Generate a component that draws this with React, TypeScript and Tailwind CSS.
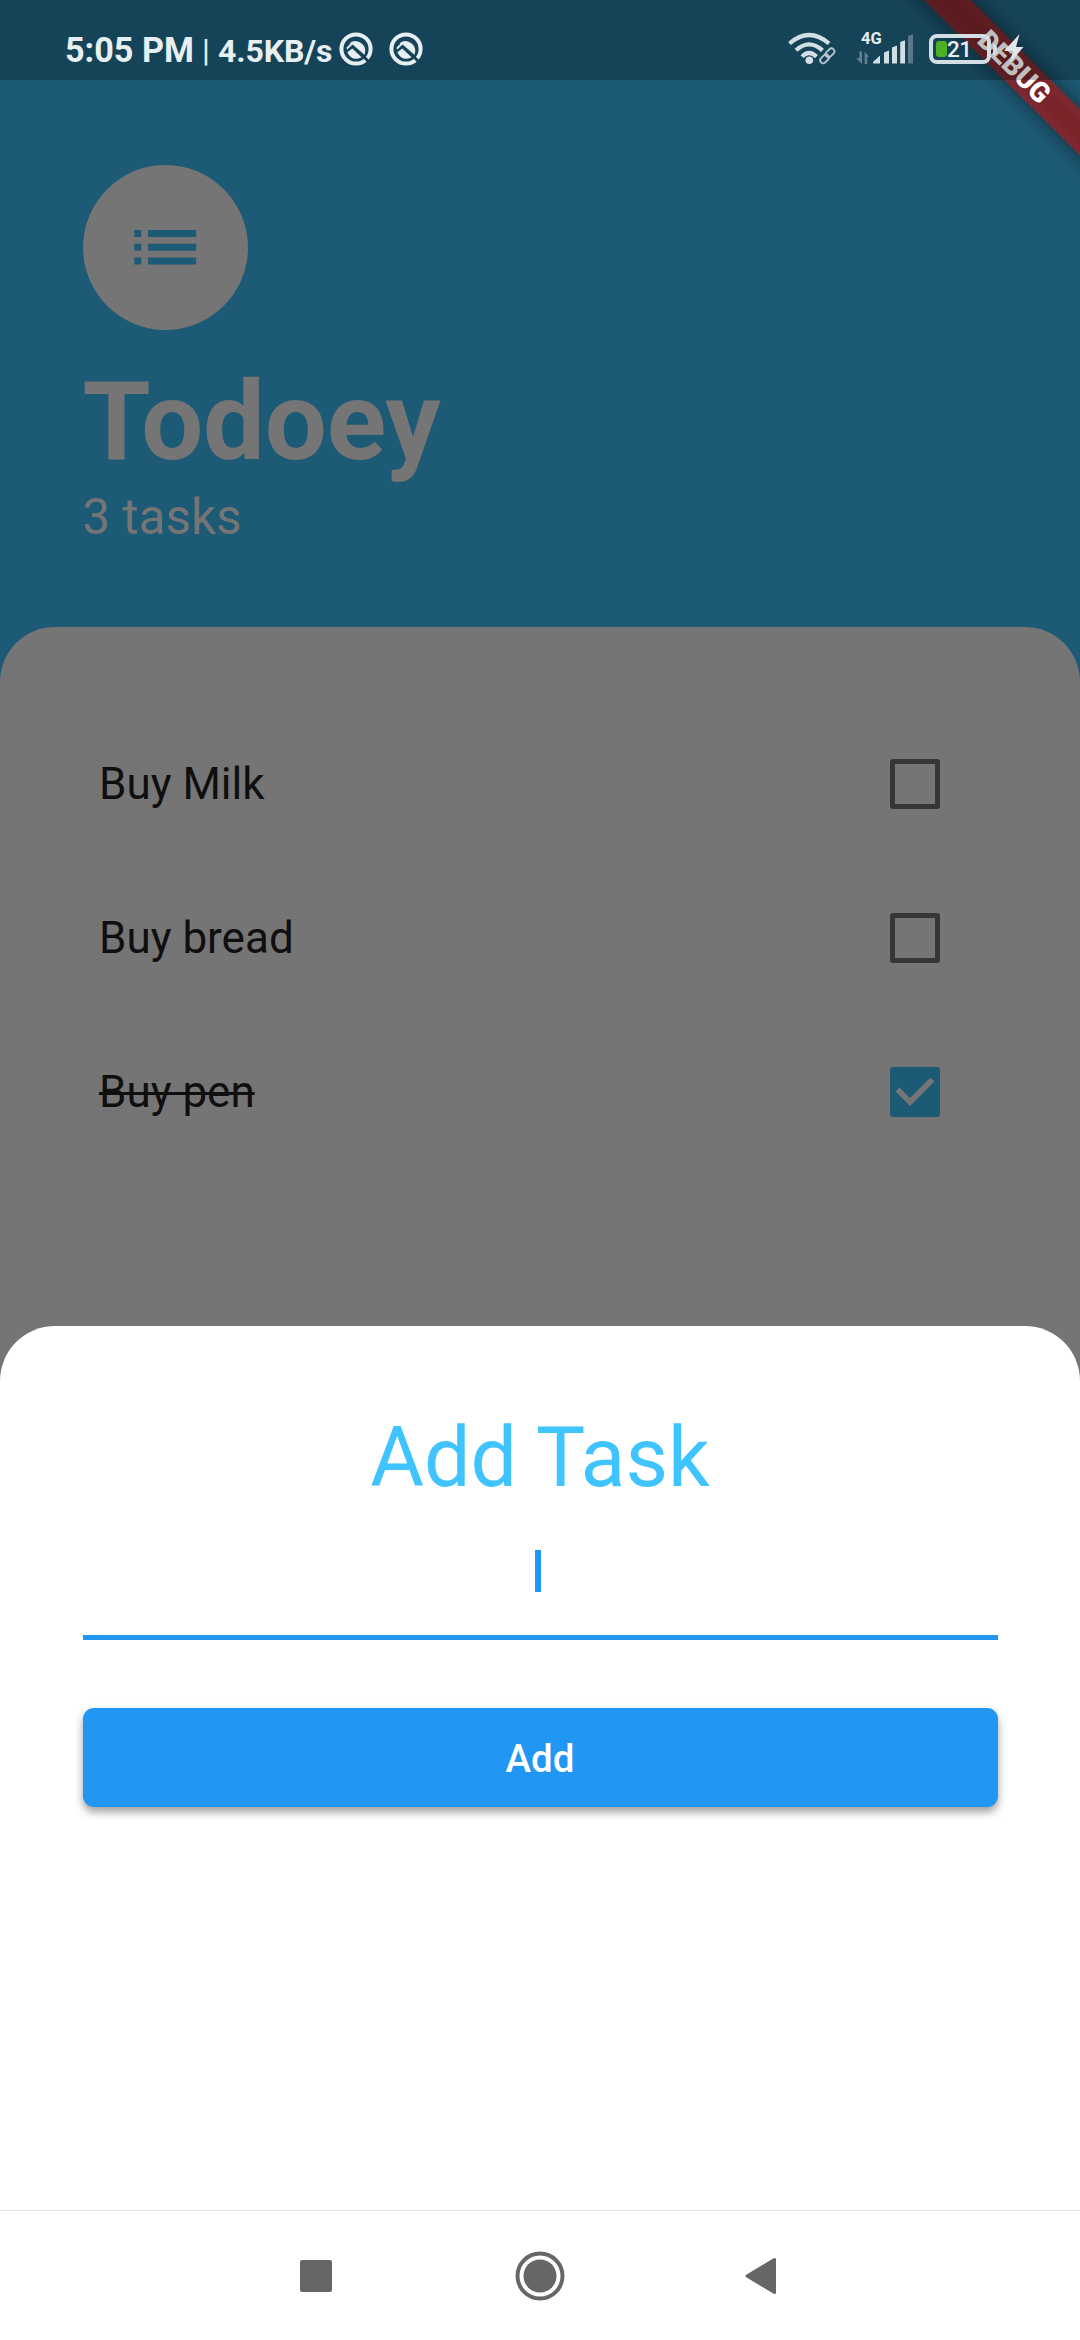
import React from "react";

const tasks = [
  { name: "Buy Milk", done: false },
  { name: "Buy bread", done: false },
  { name: "Buy pen", done: true },
];

function AppBadge() {
  return (
    <svg className="h-[34px] w-[34px] shrink-0" viewBox="0 0 34 34" fill="none">
      <circle cx="17" cy="17" r="14.6" stroke="#e8eff2" strokeWidth="4" />
      <path d="M10.500 11.200A9.800 9.800 0 0 1 26 21L25.400 22.800 13.600 12.600 8 17.800 7.600 15.600 11.500 11.800Z" fill="#e8eff2" />
      <path d="M8.300 20.200 13.300 16.400 22.600 25.200Q13 30 8.300 20.200Z" fill="#e8eff2" />
      <path d="M23.500 23.500 32 32" stroke="#184357" strokeWidth="3" />
    </svg>
  );
}

function WifiIcon() {
  return (
    <svg className="h-[34px] w-[48px]" viewBox="0 0 48 34" fill="none" stroke="#d3dfe5" strokeWidth="4.2">
      <path d="M1.5 11.5Q21 -5.5 41 11.5" />
      <path d="M8 18.3Q21 6.5 34.5 18.3" />
      <path d="M14 24.6Q21 17.5 28.5 24.6" />
      <circle cx="21.3" cy="28.3" r="3.8" fill="#d3dfe5" stroke="none" />
      <g strokeWidth="1.8" stroke="#b9c8d0">
        <rect x="-5" y="-3" width="10" height="6" rx="3" transform="translate(42 20.8) rotate(-45)" />
        <rect x="-5" y="-3" width="10" height="6" rx="3" transform="translate(36.6 26.8) rotate(-45)" />
      </g>
    </svg>
  );
}

function SignalIcon() {
  return (
    <svg className="h-[32px] w-[60px]" viewBox="0 0 60 32" fill="#d3dfe5">
      <g fill="#647f8d">
        <path d="M3.4 17.5h2.6V30L0 24.2h3.4Z" />
        <path d="M8.6 30V17.5l4.4 5.4h-1.8V30Z" />
      </g>
      <path d="M17 29.5V28l7-6.5v8Z" />
      <path d="M28 29.5V18.5l5-2v13Z" />
      <path d="M36 29.5v-16l5-2v18Z" />
      <path d="M44.2 29.5V8l4.8-1.8v23.3Z" />
      <path d="M52 29.5V2l5-1.8v29.3Z" fill="#5d7988" />
    </svg>
  );
}

function StatusBar() {
  return (
    <div className="relative z-20 flex h-[80px] items-start bg-black/25 text-[#e8eff2]">
      <div className="ml-[65px] mt-[30px] w-[137px] whitespace-nowrap text-[34.200px] font-bold leading-[40px]">5:05 PM</div>
      <div className="mt-[30px] w-[16px] text-[32px] leading-[40px]">|</div>
      <div className="mt-[31px] w-[121px] whitespace-nowrap text-[32px] font-bold leading-[40px] tracking-[-0.1px]">4.5KB/s</div>
      <div className="mt-[32px] flex gap-[16px]">
        <AppBadge />
        <AppBadge />
      </div>
      <div className="ml-[365px] mt-[32px] flex">
        <WifiIcon />
      </div>
      <div className="relative ml-[20px] mt-[34px] flex">
        <SignalIcon />
        <span className="absolute left-[5px] top-[-5px] text-[16.500px] font-bold leading-[20px]">4G</span>
      </div>
      <div className="ml-[13px] mt-[34px] flex items-center">
        <div className="flex h-[30px] w-[62px] items-center rounded-[8px] border-[4px] border-[#d3dfe5] pl-[3px]">
          <div className="h-[16px] w-[11px] shrink-0 rounded-[3px] bg-[#4caf24]" />
          <div className="text-[22.500px] font-medium leading-[24px] tracking-[-0.5px]">21</div>
        </div>
        <div className="ml-[2px] h-[11px] w-[4px] rounded-r-[4px] bg-[#d3dfe5]" />
        <svg className="ml-[7px] h-[30px] w-[20px]" viewBox="0 0 20 30" fill="#dfe7eb">
          <path d="M15.500 0 0 17h9L5.500 29.500 19.500 13H12Z" />
        </svg>
      </div>
    </div>
  );
}

function DebugBanner() {
  return (
    <div className="absolute right-0 top-0 z-10 h-[220px] w-[220px] overflow-hidden">
      <div className="absolute left-[-12px] top-[48.500px] h-[33px] w-[330px] rotate-45 bg-black/50 blur-[10px]" />
      <div className="absolute left-[-12px] top-[48.500px] flex h-[33px] w-[330px] rotate-45 items-center justify-center bg-[#b71c1c]/63 pl-[4px] text-[28px] font-black leading-[33px] text-white">
        DEBUG
      </div>
    </div>
  );
}

function Checkbox({ done }: { done: boolean }) {
  if (!done) {
    return <div className="h-[50px] w-[50px] rounded-[3px] border-[5.500px] border-[#363636]" />;
  }
  return (
    <div className="h-[50px] w-[50px] rounded-[3px] bg-[#1d5a75]">
      <svg viewBox="0 0 50 50" fill="none" stroke="#757575" strokeWidth="5.5">
        <path d="M7.500 22.500 20 35 42.500 12.500" />
      </svg>
    </div>
  );
}

export default function App() {
  return (
    <div className="relative flex h-[2340px] w-[1080px] flex-col overflow-hidden bg-[#1d5a75] font-[Roboto,sans-serif]">
      <StatusBar />
      <DebugBanner />

      <header className="h-[547px] pl-[82.500px] pt-[85px] text-[#757575]">
        <div className="flex h-[165px] w-[165px] items-center justify-center rounded-full bg-[#757575]">
          <svg className="h-[82.500px] w-[82.500px]" viewBox="0 0 24 24" fill="#1d5a75">
            <path d="M3 13h2v-2H3v2zm0 4h2v-2H3v2zm0-8h2V7H3v2zm4 4h14v-2H7v2zm0 4h14v-2H7v2zM7 7v2h14V7H7z" />
          </svg>
        </div>
        <h1 className="mt-[27px] text-[110px] font-bold leading-[129px] tracking-[-0.2px]">Todoey</h1>
        <p className="mt-[2px] text-[49.500px] leading-[58px]">3 tasks</p>
      </header>

      <main className="-mb-[60px] h-[759px] shrink-0 rounded-t-[55px] bg-[#757575] pl-[99px] pr-[140px] pt-[80px]">
        {tasks.map((task) => (
          <div key={task.name} className="flex h-[154px] items-center justify-between">
            <span className={task.done ? "text-[44px] leading-[52px] text-[#0f0f0f] line-through decoration-[2.500px]" : "text-[44px] leading-[52px] text-[#0f0f0f]"}>
              {task.name}
            </span>
            <Checkbox done={task.done} />
          </div>
        ))}
      </main>

      <section className="relative z-10 flex h-[884px] shrink-0 flex-col rounded-t-[55px] bg-white px-[82.500px] pt-[83px]">
        <h2 className="text-center text-[82.500px] leading-[97px] text-[#40c4ff]">Add Task</h2>
        <div className="mt-[18px] flex h-[116px] justify-center border-b-[5.500px] border-[#2196f3] pt-[26px]">
          <div className="mr-[4px] h-[42px] w-[6px] bg-[#2196f3]" />
        </div>
        <button className="mt-[68px] h-[99px] rounded-[11px] bg-[#2196f3] pt-[2px] text-[38.500px] font-medium leading-[97px] text-white shadow-[0_5px_8px_rgba(0,0,0,0.38)]">
          Add
        </button>
      </section>

      <nav className="relative z-10 flex h-[130px] shrink-0 items-center border-t border-[#e2e2e2] bg-white pl-[300px] text-[#666666]">
        <div className="h-[32px] w-[32px] rounded-[2px] bg-[#666666]" />
        <svg className="ml-[183px] h-[50px] w-[50px]" viewBox="0 0 50 50">
          <circle cx="25" cy="25" r="22.500" fill="none" stroke="currentColor" strokeWidth="4" />
          <circle cx="25" cy="25" r="16.500" fill="currentColor" />
        </svg>
        <svg className="ml-[179px] h-[38px] w-[33px]" viewBox="0 0 33 38" fill="currentColor" stroke="currentColor" strokeWidth="3" strokeLinejoin="round">
          <path d="M3 19 30.500 2.500v33Z" />
        </svg>
      </nav>
    </div>
  );
}
